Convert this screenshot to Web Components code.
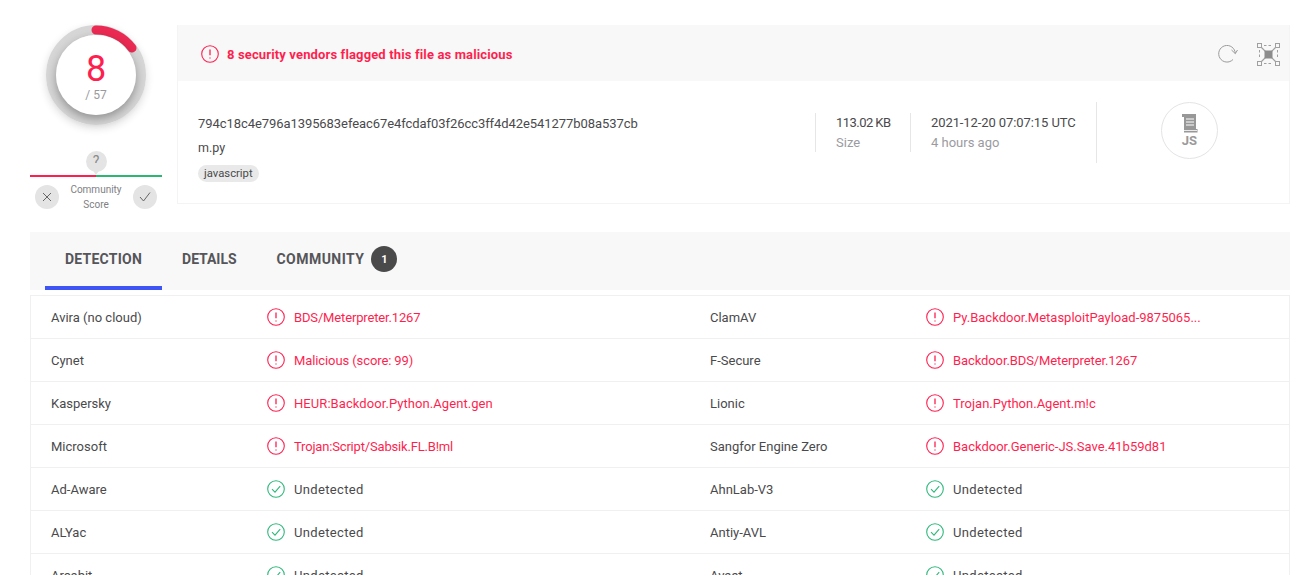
<!DOCTYPE html>
<html>
<head>
<meta charset="utf-8">
<style>
html, body { margin: 0; height: 575px; overflow: hidden; background: #fff; }
body { font-family: Roboto, "Liberation Sans", sans-serif; color: #4a4a4c; }
</style>
</head>
<body>
<vt-page></vt-page>

<script>
const RED = "#ff1f4f";
const GREEN = "#2fb87c";

// the reference font runs a little narrower on these strings
const TIGHT = {
  "BDS/Meterpreter.1267": -0.15,
  "Backdoor.BDS/Meterpreter.1267": -0.1,
  "Trojan:Script/Sabsik.FL.B!ml": -0.18,
  "Malicious (score: 99)": -0.1,
  "HEUR:Backdoor.Python.Agent.gen": 0.07
};

function alertIcon(size) {
  return `<svg width="${size}" height="${size}" viewBox="0 0 18 18" fill="none" stroke="${RED}" stroke-width="1.1"><circle cx="9" cy="9" r="8.3"/><path d="M9 4.6v5.6M9 12.4v1.2" stroke-width="1.3"/></svg>`;
}

function okIcon(size) {
  return `<svg width="${size}" height="${size}" viewBox="0 0 18 18" fill="none" stroke="${GREEN}" stroke-width="1.1"><circle cx="9" cy="9" r="8.3"/><path d="M5 9.2l3 3 5.2-6"/></svg>`;
}

class VtScore extends HTMLElement {
  constructor() {
    super();
    this.attachShadow({ mode: "open" });
    this.shadowRoot.innerHTML = `
    <style>
    :host { display: flex; flex-direction: column; align-items: center; width: 132px; flex: none; }
    .ring { width: 100px; height: 100px; position: relative; border-radius: 50%; box-shadow: 0 3px 8px rgba(0,0,0,.14); }
    .ring svg { position: absolute; left: 0; top: 0; }
    .disc {
      position: absolute; left: 10px; top: 10px; width: 80px; height: 80px; border-radius: 50%;
      background: #fff; box-shadow: 0 4px 10px rgba(0,0,0,.32);
      display: flex; flex-direction: column; align-items: center;
    }
    .num { font-size: 36px; line-height: 40px; color: ${RED}; margin-top: 14px; font-weight: 400; }
    .den { font-size: 12px; line-height: 16px; color: #9a9a9c; margin-top: -2px; }
    .pin { width: 21px; height: 21px; margin-top: 26px; background: #e4e4e4; border-radius: 50%; color: #8a8a8a; font-size: 14px; line-height: 21px; text-align: center; position: relative; }
    .pin::after { content: ""; position: absolute; left: 3px; top: 13px; width: 15px; height: 11px; background: #e4e4e4; clip-path: polygon(0 0, 100% 0, 50% 100%); }
    .bar { display: flex; width: 132px; height: 2px; margin-top: 3px; position: relative; }
    .bar i { flex: 1; background: ${RED}; }
    .bar i + i { background: #2bb673; }
    .votes { display: flex; justify-content: space-between; align-items: center; width: 122px; margin-top: 5px; }
    .vote { width: 24px; height: 24px; border-radius: 50%; background: #e4e4e4; display: flex; align-items: center; justify-content: center; }
    .label { font-size: 10px; line-height: 15px; color: #808084; text-align: center; }
    </style>
    <div class="ring">
      <svg width="100" height="100" viewBox="0 0 100 100">
        <circle cx="50" cy="50" r="45" fill="none" stroke="#d6d6d6" stroke-width="10"/>
        <path d="M50 5A45 45 0 0 1 86 23" fill="none" stroke="#ea2a53" stroke-width="9" stroke-linecap="round"/>
      </svg>
      <div class="disc"><div class="num">8</div><div class="den">/ 57</div></div>
    </div>
    <div class="pin">?</div>
    <div class="bar"><i></i><i></i></div>
    <div class="votes">
      <div class="vote"><svg width="12" height="12" viewBox="0 0 12 12" fill="none" stroke="#666" stroke-width="1"><path d="M2 2l8 8M10 2l-8 8"/></svg></div>
      <div class="label">Community<br>Score</div>
      <div class="vote"><svg width="14" height="12" viewBox="0 0 14 12" fill="none" stroke="#666" stroke-width="1"><path d="M2 6l3.500 4L12 1.500"/></svg></div>
    </div>`;
  }
}

class VtSummary extends HTMLElement {
  constructor() {
    super();
    this.attachShadow({ mode: "open" });
    this.shadowRoot.innerHTML = `
    <style>
    :host { display: block; flex: 1; border: 1px solid #f4f4f4; border-top: 0; height: 179px; box-sizing: border-box; }
    header { height: 56px; box-sizing: border-box; padding: 2px 9px 0 23px; background: #f8f8f8; display: flex; align-items: center; gap: 8px; }
    .flag { font-size: 13px; font-weight: 700; color: ${RED}; flex: 1; letter-spacing: .14px; }
    header svg { display: block; }
    .tools { display: flex; align-items: center; gap: 18px; }
    .body { display: flex; align-items: flex-start; padding-top: 21px; }
    .file { width: 637px; padding: 11px 0 0 20px; box-sizing: border-box; font-size: 13px; flex: none; }
    .hash { line-height: 20px; white-space: nowrap; letter-spacing: -.07px; margin-top: 1px; }
    .name { line-height: 20px; margin-top: 4px; font-size: 12.5px; }
    .tag { display: inline-block; margin-top: 7px; background: #e9e9e9; border-radius: 9px; font-size: 11.3px; line-height: 17px; padding: 0 6px; }
    .meta { border-left: 1px solid #e6e6e6; height: 39px; margin-top: 11px; padding-left: 20px; font-size: 13px; line-height: 20px; flex: none; box-sizing: border-box; }
    .meta.size { width: 95px; }
    .meta.size b { letter-spacing: -.55px; }
    .meta.date { width: 186px; }
    .meta.date b { letter-spacing: -.09px; }
    .meta span { display: block; color: #9b9b9f; }
    .meta b { display: block; font-weight: 400; white-space: nowrap; }
    .type { border-left: 1px solid #e6e6e6; height: 61px; flex: 1; display: flex; align-items: center; justify-content: center; padding-right: 7px; }
    .badge { width: 55px; height: 55px; border: 1px solid #e4e4e4; border-radius: 50%; display: flex; flex-direction: column; align-items: center; justify-content: center; color: #9a9a9a; font-weight: 700; font-size: 13px; line-height: 13px; margin-top: -4px; }
    </style>
    <header>
      ${alertIcon(18)}
      <div class="flag">8 security vendors flagged this file as malicious</div>
      <div class="tools">
        <svg width="21" height="18" viewBox="0 0 21 18" fill="none" stroke="#9a9a9a" stroke-width="1"><path d="M17.300 8.500A8.300 8.300 0 1 0 15 14.500"/><path d="M13.500 5l3.800 3.600L19.500 5"/></svg>
        <svg width="23" height="23" viewBox="0 0 23 23" fill="none" stroke="#a0a0a0" stroke-width="1">
          <rect x=".5" y=".5" width="4" height="4"/><rect x="18.5" y=".5" width="4" height="4"/><rect x=".5" y="18.5" width="4" height="4"/><rect x="18.5" y="18.5" width="4" height="4"/>
          <path d="M7 2.500h9M7 20.500h9M2.500 7v9M20.500 7v9" stroke-dasharray="2.500 2"/>
          <path d="M4.500 4.500l14 14M18.500 4.500l-14 14" stroke-width="1.200"/>
          <rect x="7.500" y="7.500" width="8" height="8" fill="#8c8c8c" stroke="none"/>
        </svg>
      </div>
    </header>
    <div class="body">
      <div class="file">
        <div class="hash">794c18c4e796a1395683efeac67e4fcdaf03f26cc3ff4d42e541277b08a537cb</div>
        <div class="name">m.py</div>
        <div class="tag">javascript</div>
      </div>
      <div class="meta size"><b>113.02 KB</b><span>Size</span></div>
      <div class="meta date"><b>2021-12-20 07:07:15 UTC</b><span>4 hours ago</span></div>
      <div class="type">
        <div class="badge">
          <svg width="16" height="20" viewBox="0 0 16 20"><path d="M0 0h14v15h1.500v3.500H2V3H0z" fill="#989898"/><path d="M4 5h8M4 8h8M4 11h8" stroke="#fff" stroke-width="1"/><path d="M2 16.500h13" stroke="#fff" stroke-width=".8"/></svg>
          <div>JS</div>
        </div>
      </div>
    </div>`;
  }
}

class VtTabs extends HTMLElement {
  constructor() {
    super();
    this.attachShadow({ mode: "open" });
    this.shadowRoot.innerHTML = `
    <style>
    :host { display: flex; height: 58px; background: #f8f8f8; padding-left: 15px; margin-top: 20px; color: #55555a; font-size: 14px; font-weight: 700; letter-spacing: .24px; }
    .tab { display: flex; align-items: center; height: 54px; padding: 0 20px; border-bottom: 4px solid transparent; }
    .tab.on { border-bottom-color: #3e54f5; }
    .tab.mid { letter-spacing: -.05px; }
    .tab.last { gap: 7px; padding: 0 0 0 20px; letter-spacing: .46px; }
    .count { width: 26px; height: 26px; border-radius: 50%; background: #4a4a4a; color: #fff; font-size: 11px; letter-spacing: 0; display: flex; align-items: center; justify-content: center; }
    </style>
    <div class="tab on">DETECTION</div>
    <div class="tab mid">DETAILS</div>
    <div class="tab last">COMMUNITY<span class="count">1</span></div>`;
  }
}

class VtRow extends HTMLElement {
  constructor() {
    super();
    this.attachShadow({ mode: "open" });
    const cell = (name, value) => {
      const bad = value !== "Undetected";
      const ls = TIGHT[value] ? ` style="letter-spacing:${TIGHT[value]}px"` : "";
      return `<div class="cell">
        <div class="vendor">${name}</div>
        <div class="res ${bad ? "bad" : "ok"}">${bad ? alertIcon(18) : okIcon(18)}<span${ls}>${value}</span></div>
      </div>`;
    };
    this.shadowRoot.innerHTML = `
    <style>
    :host { display: flex; height: 43px; box-sizing: border-box; border-bottom: 1px solid #f0f0f0; font-size: 13px; }
    .cell { display: flex; align-items: center; flex: none; width: 659px; padding-left: 20px; box-sizing: border-box; }
    .vendor { width: 216px; flex: none; white-space: nowrap; }
    .res { display: flex; align-items: center; gap: 9px; white-space: nowrap; }
    .res.bad { color: ${RED}; }
    .res.ok span { letter-spacing: .35px; }
    svg { flex: none; }
    </style>
    ${cell(this.getAttribute("a"), this.getAttribute("av"))}
    ${cell(this.getAttribute("b"), this.getAttribute("bv"))}`;
  }
}

class VtPage extends HTMLElement {
  constructor() {
    super();
    this.attachShadow({ mode: "open" });
    const rows = [
      ["Avira (no cloud)", "BDS/Meterpreter.1267", "ClamAV", "Py.Backdoor.MetasploitPayload-9875065..."],
      ["Cynet", "Malicious (score: 99)", "F-Secure", "Backdoor.BDS/Meterpreter.1267"],
      ["Kaspersky", "HEUR:Backdoor.Python.Agent.gen", "Lionic", "Trojan.Python.Agent.m!c"],
      ["Microsoft", "Trojan:Script/Sabsik.FL.B!ml", "Sangfor Engine Zero", "Backdoor.Generic-JS.Save.41b59d81"],
      ["Ad-Aware", "Undetected", "AhnLab-V3", "Undetected"],
      ["ALYac", "Undetected", "Antiy-AVL", "Undetected"],
      ["Arcabit", "Undetected", "Avast", "Undetected"]
    ];
    const html = rows.map(r => `<vt-row a="${r[0]}" av="${r[1]}" b="${r[2]}" bv="${r[3]}"></vt-row>`).join("");
    this.shadowRoot.innerHTML = `
    <style>
    :host { display: block; padding: 25px 14px 0 30px; height: 575px; box-sizing: border-box; overflow: hidden; }
    .top { display: flex; gap: 15px; }
    .table { margin-top: 5px; border: 1px solid #f0f0f0; border-bottom: 0; }
    </style>
    <div class="top"><vt-score></vt-score><vt-summary></vt-summary></div>
    <vt-tabs></vt-tabs>
    <div class="table">${html}</div>`;
  }
}

customElements.define("vt-score", VtScore);
customElements.define("vt-summary", VtSummary);
customElements.define("vt-tabs", VtTabs);
customElements.define("vt-row", VtRow);
customElements.define("vt-page", VtPage);
</script>
</body>
</html>
